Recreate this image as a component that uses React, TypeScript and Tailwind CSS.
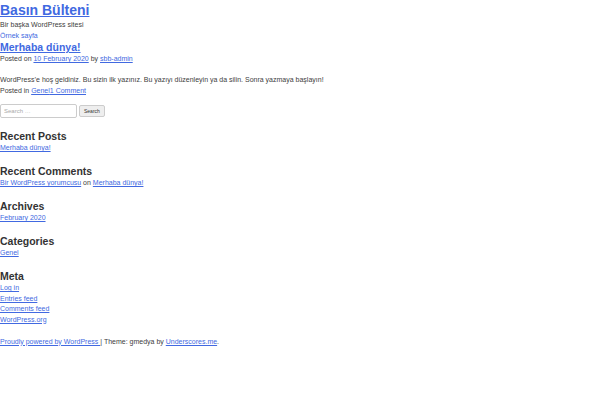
import React from 'react';

const link = 'text-[#4169e1] underline';

const Widget = ({ title, children }: { title: string; children: React.ReactNode }) => (
  <section className="mb-[10.5px]">
    <h2 className="text-[10.5px] leading-[14px] font-bold text-[#333]">{title}</h2>
    <ul className="text-[7px] leading-[10.5px]">{children}</ul>
  </section>
);

export default function App() {
  return (
    <div className="w-[600px] h-[400px] bg-white text-[#404040] text-[7px] leading-[11px] font-['Liberation_Sans',Arial,sans-serif]">
      <header>
        <h1 className="text-[14px] leading-[17px] font-bold pt-[2px]">
          <a href="#" className={link}>Basın Bülteni</a>
        </h1>
        <p className="leading-[10px] mt-[1px]">Bir başka WordPress sitesi</p>
        <nav>
          <a href="#" className="text-[#4169e1]">Örnek sayfa</a>
        </nav>
      </header>

      <article>
        <h2 className="text-[10.5px] leading-[13px] font-bold">
          <a href="#" className={link}>Merhaba dünya!</a>
        </h2>
        <div className="leading-[10px]">
          Posted on <a href="#" className={link}>10 February 2020</a> by <a href="#" className={link}>sbb-admin</a>
        </div>
        <p className="mt-[10px]">WordPress’e hoş geldiniz. Bu sizin ilk yazınız. Bu yazıyı düzenleyin ya da silin. Sonra yazmaya başlayın!</p>
        <div>
          Posted in <a href="#" className={link}>Genel</a><a href="#" className={link}>1 Comment</a>
        </div>
      </article>

      <aside className="mt-[8px]">
        <form className="flex items-center gap-[2px] mb-[11px]">
          <input
            type="search"
            placeholder="Search …"
            className="w-[77px] h-[14px] border border-[#ccc] rounded-[2px] px-[3px] text-[6px] placeholder:text-[#aaa]"
          />
          <button className="h-[12px] px-[4px] border border-[#ccc] rounded-[2px] bg-[#eee] text-[5px] text-[#333]">
            Search
          </button>
        </form>

        <Widget title="Recent Posts">
          <li><a href="#" className={link}>Merhaba dünya!</a></li>
        </Widget>
        <Widget title="Recent Comments">
          <li>
            <a href="#" className={link}>Bir WordPress yorumcusu</a> on <a href="#" className={link}>Merhaba dünya!</a>
          </li>
        </Widget>
        <Widget title="Archives">
          <li><a href="#" className={link}>February 2020</a></li>
        </Widget>
        <Widget title="Categories">
          <li><a href="#" className={link}>Genel</a></li>
        </Widget>
        <Widget title="Meta">
          <li><a href="#" className={link}>Log in</a></li>
          <li><a href="#" className={link}>Entries feed</a></li>
          <li><a href="#" className={link}>Comments feed</a></li>
          <li><a href="#" className={link}>WordPress.org</a></li>
        </Widget>
      </aside>

      <footer>
        <a href="#" className={link}>Proudly powered by WordPress </a>| Theme: gmedya by <a href="#" className={link}>Underscores.me</a>.
      </footer>
    </div>
  );
}
